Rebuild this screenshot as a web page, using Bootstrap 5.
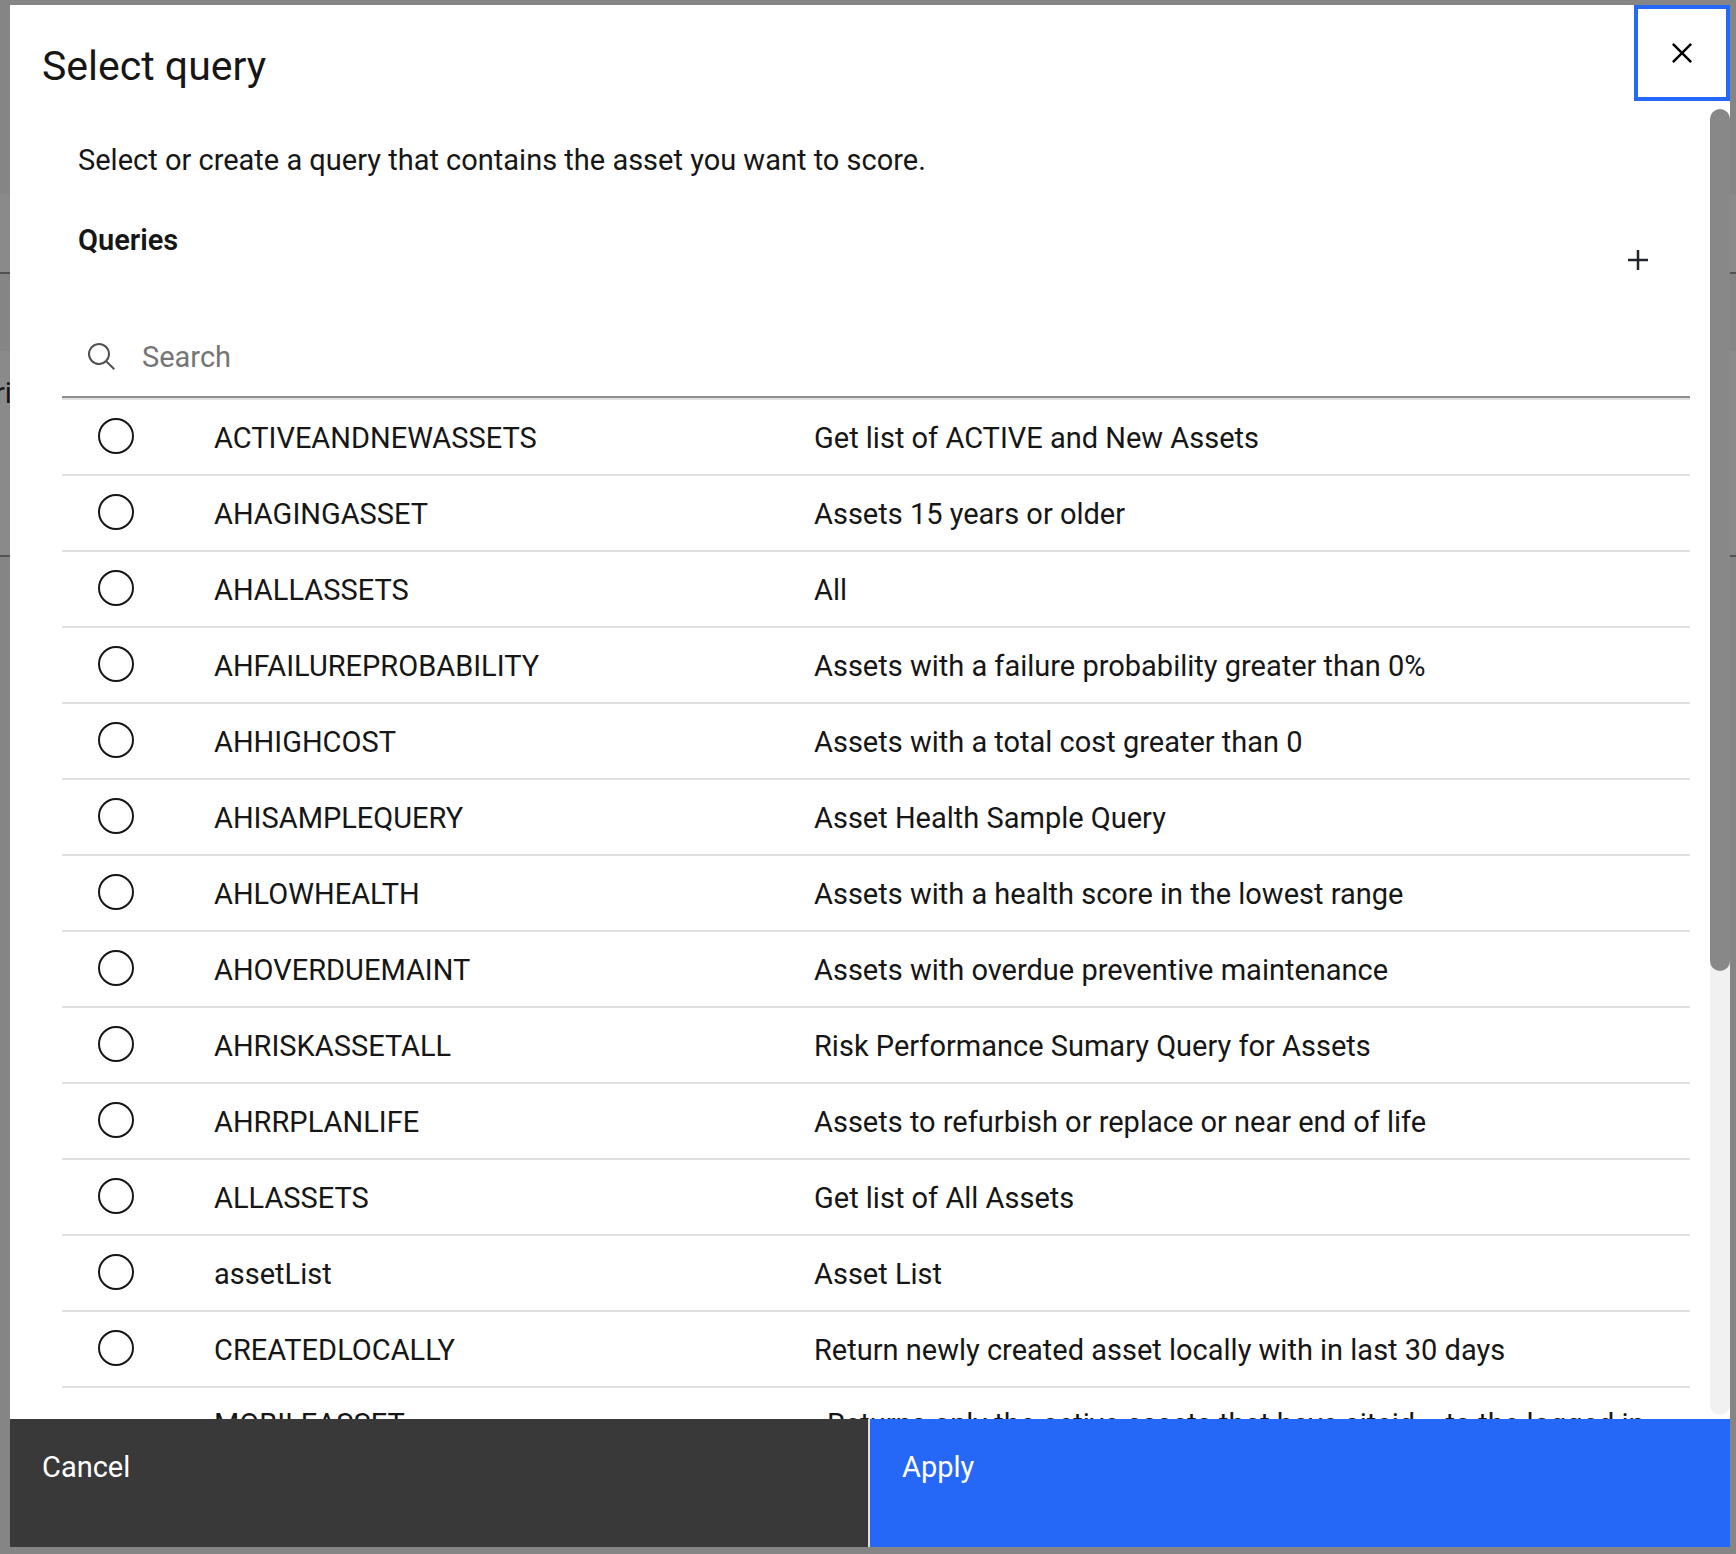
<!DOCTYPE html>
<html lang="en">
<head>
<meta charset="utf-8">
<meta name="viewport" content="width=device-width, initial-scale=1">
<title>Select query</title>
<link rel="stylesheet" href="https://cdn.jsdelivr.net/npm/bootstrap@5.3.0/dist/css/bootstrap.min.css">
<style>
  :root { --ink: #161616; --accent: #2567f6; --line: #e0e0e0; --shade: #858585; --shade-alt: #8a8a8a; --shade-line: #525252; }
  body { font-family: Roboto, "Noto Sans", sans-serif; font-size: 29px; line-height: 40px; color: var(--ink); background: var(--shade); overflow: hidden; }

  /* dimmed page under the dialog */
  .page-under { inset: 0; z-index: 0; }
  .band-top { height: 194px; }
  .band-tabs { height: 80px; background: var(--shade-alt); border-bottom: 2px solid var(--shade-line); }
  .band-gap { height: 77px; }
  .band-field { height: 206px; padding-top: 22px; margin-left: -5px; background: var(--shade-alt); border-bottom: 2px solid var(--shade-line); }

  .frame { height: 100vh; padding: 5px 6px 7px 10px; z-index: 1; }
  .dialog-head { height: 96px; padding-left: 32px; }
  .dialog-title { font-size: 41px; line-height: 48px; font-weight: 400; padding-top: 37px; }
  .close-btn { width: 96px; border: 4px solid var(--accent); }
  .icon-lg { width: 40px; height: 40px; fill: currentColor; }

  .scroll-area { padding: 39px 20px 0 52px; scrollbar-width: none; }
  .scroll-area::-webkit-scrollbar { display: none; }
  .inset-text { padding-left: 16px; }
  .section-row { margin-top: 40px; padding-right: 12px; }
  .section-title { font-size: 29px; line-height: 40px; font-weight: 600; }
  .add-btn { width: 80px; height: 80px; }

  .search-box { margin-top: 18px; height: 80px; padding-left: 24px; gap: 24px; border-bottom: 2px solid #8d8d8d; }
  .search-box svg { width: 32px; height: 32px; fill: #525252; }
  .search-box input { font-size: 29px; line-height: 40px; color: var(--ink); box-shadow: none !important; }
  .search-box input::placeholder { color: #757575; opacity: 1; }

  .query-table { table-layout: fixed; border-collapse: separate; border-spacing: 0; }
  .query-table td { border-top: 2px solid var(--line); padding: 18px 0 16px; }
  .col-pick { width: 152px; }
  .col-name { width: 600px; }
  .query-table .pick-cell { padding-left: 36px; padding-bottom: 0; }
  .pick-cell .form-check-input { width: 36px; height: 36px; margin: 0; border: 2px solid var(--ink); }
  .query-table .two-line td { padding-top: 16px; padding-bottom: 16px; }
  .query-table .two-line .desc-cell { padding-left: 13px; }
  .query-table .two-line .pick-cell { padding-top: 37px; }

  .rail { width: 20px; margin: 8px 0 4px; background: #f1f1f1; border-radius: 10px; }
  .rail-thumb { height: 66%; background: #888; border-radius: 10px; }

  .dialog-foot { height: 128px; }
  .foot-btn { padding: 28px 32px; font-size: 29px; line-height: 40px; border: 0; }
  .foot-cancel { background: #393939; border-right: 2px solid var(--line); }
  .foot-apply { background: var(--accent); }
</style>
</head>
<body>
<div class="page-under position-absolute" aria-hidden="true">
  <div class="band-top"></div>
  <div class="band-tabs"></div>
  <div class="band-gap"></div>
  <div class="band-field">ri</div>
</div>

<div class="frame position-relative">
  <div class="d-flex flex-column h-100 bg-white" role="dialog" aria-modal="true" aria-labelledby="dialogTitle">
    <header class="dialog-head d-flex justify-content-between flex-shrink-0">
      <h1 class="dialog-title mb-0" id="dialogTitle">Select query</h1>
      <button type="button" class="close-btn bg-white p-0 d-flex align-items-center justify-content-center" aria-label="Close">
        <svg class="icon-lg" viewBox="0 0 32 32"><path d="M24 9.4 22.6 8 16 14.6 9.4 8 8 9.4 14.6 16 8 22.6 9.4 24 16 17.4 22.6 24 24 22.6 17.4 16 24 9.4z"/></svg>
      </button>
    </header>

    <div class="d-flex flex-grow-1 overflow-hidden">
      <main class="scroll-area flex-grow-1 overflow-auto">
        <p class="inset-text mb-0">Select or create a query that contains the asset you want to score.</p>
        <div class="section-row d-flex justify-content-between align-items-start">
          <h2 class="section-title inset-text mb-0">Queries</h2>
          <button type="button" class="add-btn btn rounded-0 border-0 p-0 d-flex align-items-center justify-content-center" aria-label="Add query">
            <svg class="icon-lg" viewBox="0 0 32 32"><path d="M17 15V8h-2v7H8v2h7v7h2v-7h7v-2z"/></svg>
          </button>
        </div>
        <div class="search-box d-flex align-items-center">
          <label for="querySearch" class="d-flex" aria-label="Search"><svg viewBox="0 0 32 32"><path d="M29 27.586l-7.552-7.552a11.018 11.018 0 1 0-1.414 1.414L27.586 29zM4 13a9 9 0 1 1 9 9 9.01 9.01 0 0 1-9-9z"/></svg></label>
          <input type="text" id="querySearch" class="form-control border-0 rounded-0 p-0" placeholder="Search">
        </div>

        <table class="query-table w-100">
          <colgroup><col class="col-pick"><col class="col-name"><col></colgroup>
          <tbody class="align-top">
            <tr><td class="pick-cell"><input class="form-check-input d-block" type="radio" name="query" id="q1"></td><td><label for="q1">ACTIVEANDNEWASSETS</label></td><td>Get list of ACTIVE and New Assets</td></tr>
            <tr><td class="pick-cell"><input class="form-check-input d-block" type="radio" name="query" id="q2"></td><td><label for="q2">AHAGINGASSET</label></td><td>Assets 15 years or older</td></tr>
            <tr><td class="pick-cell"><input class="form-check-input d-block" type="radio" name="query" id="q3"></td><td><label for="q3">AHALLASSETS</label></td><td>All</td></tr>
            <tr><td class="pick-cell"><input class="form-check-input d-block" type="radio" name="query" id="q4"></td><td><label for="q4">AHFAILUREPROBABILITY</label></td><td>Assets with a failure probability greater than 0%</td></tr>
            <tr><td class="pick-cell"><input class="form-check-input d-block" type="radio" name="query" id="q5"></td><td><label for="q5">AHHIGHCOST</label></td><td>Assets with a total cost greater than 0</td></tr>
            <tr><td class="pick-cell"><input class="form-check-input d-block" type="radio" name="query" id="q6"></td><td><label for="q6">AHISAMPLEQUERY</label></td><td>Asset Health Sample Query</td></tr>
            <tr><td class="pick-cell"><input class="form-check-input d-block" type="radio" name="query" id="q7"></td><td><label for="q7">AHLOWHEALTH</label></td><td>Assets with a health score in the lowest range</td></tr>
            <tr><td class="pick-cell"><input class="form-check-input d-block" type="radio" name="query" id="q8"></td><td><label for="q8">AHOVERDUEMAINT</label></td><td>Assets with overdue preventive maintenance</td></tr>
            <tr><td class="pick-cell"><input class="form-check-input d-block" type="radio" name="query" id="q9"></td><td><label for="q9">AHRISKASSETALL</label></td><td>Risk Performance Sumary Query for Assets</td></tr>
            <tr><td class="pick-cell"><input class="form-check-input d-block" type="radio" name="query" id="q10"></td><td><label for="q10">AHRRPLANLIFE</label></td><td>Assets to refurbish or replace or near end of life</td></tr>
            <tr><td class="pick-cell"><input class="form-check-input d-block" type="radio" name="query" id="q11"></td><td><label for="q11">ALLASSETS</label></td><td>Get list of All Assets</td></tr>
            <tr><td class="pick-cell"><input class="form-check-input d-block" type="radio" name="query" id="q12"></td><td><label for="q12">assetList</label></td><td>Asset List</td></tr>
            <tr><td class="pick-cell"><input class="form-check-input d-block" type="radio" name="query" id="q13"></td><td><label for="q13">CREATEDLOCALLY</label></td><td>Return newly created asset locally with in last 30 days</td></tr>
            <tr class="two-line"><td class="pick-cell"><input class="form-check-input d-block" type="radio" name="query" id="q14"></td><td><label for="q14">MOBILEASSET</label></td><td class="desc-cell">Returns only the active assets that have siteid = to the logged in</td></tr>
          </tbody>
        </table>
      </main>
      <div class="rail flex-shrink-0" aria-hidden="true"><div class="rail-thumb"></div></div>
    </div>

    <footer class="dialog-foot d-flex flex-shrink-0">
      <button type="button" class="foot-btn foot-cancel w-50 text-white d-flex align-items-start">Cancel</button>
      <button type="button" class="foot-btn foot-apply w-50 text-white d-flex align-items-start">Apply</button>
    </footer>
  </div>
</div>
<script src="https://cdn.jsdelivr.net/npm/bootstrap@5.3.0/dist/js/bootstrap.bundle.min.js"></script>
</body>
</html>
